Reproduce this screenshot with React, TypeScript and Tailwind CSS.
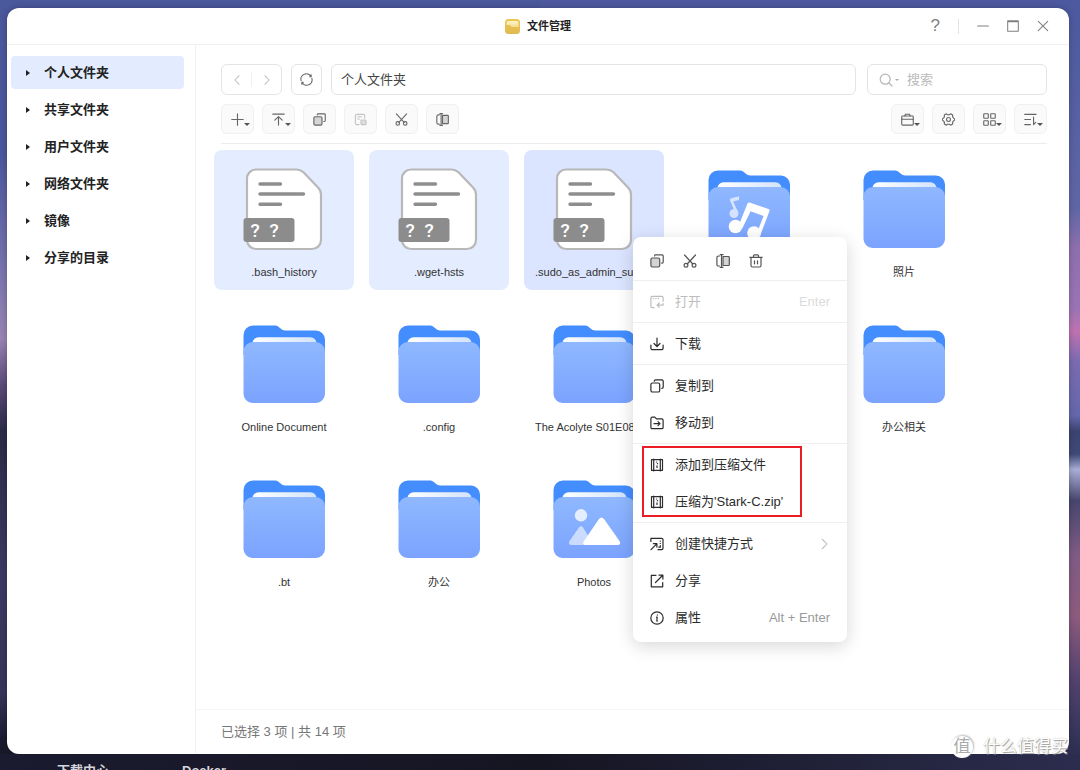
import type { ReactNode } from 'react';

type IconProps = { className?: string; children: ReactNode };

function Icon({ className = 'size-3.5', children }: IconProps) {
  return (
    <svg
      viewBox="0 0 14 14"
      className={`shrink-0 ${className}`}
      fill="none"
      stroke="currentColor"
      strokeWidth="1.2"
      strokeLinecap="round"
      strokeLinejoin="round"
      aria-hidden="true"
    >
      {children}
    </svg>
  );
}

const CopyIcon = () => (
  <Icon>
    <rect x="0.9" y="4" width="8.8" height="9" rx="1.4" fill="#d4d4d4" />
    <path d="M4.6 2V1.8A1 1 0 0 1 5.600.9H12.200a1 1 0 0 1 1 1v6.200a1 1 0 0 1-1 1h-.6" />
  </Icon>
);
const CopyToIcon = () => (
  <Icon>
    <rect x="0.9" y="4" width="8.8" height="9" rx="1.6" />
    <path d="M4.2 2.100a1.400 1.400 0 0 1 1.400-1.200h6.200a1.400 1.400 0 0 1 1.400 1.400v5.600a1.400 1.400 0 0 1-1.400 1.400" />
  </Icon>
);
const PasteIcon = () => (
  <Icon>
    <path d="M5.500 12.500H3a1.500 1.500 0 0 1-1.500-1.500V3A1.500 1.500 0 0 1 3 1.500h7A1.500 1.500 0 0 1 11.500 3v2.500M4 4h4M4 6.500h2" />
    <rect x="7.500" y="7.500" width="5.500" height="5" rx="1" fill="#dedede" />
  </Icon>
);
const CutIcon = () => (
  <Icon>
    <path d="M1.500 1l8.300 9M12.500 1l-8.300 9" />
    <circle cx="3" cy="11.200" r="1.900" />
    <circle cx="11" cy="11.200" r="1.900" />
  </Icon>
);
const RenameIcon = () => (
  <Icon>
    <path d="M7 2.500h5.500a.8.8 0 0 1 .8.8v7.400a.8.8 0 0 1-.8.8H7z" fill="#d4d4d4" />
    <path d="M3.500 2H2.500A1.600 1.600 0 0 0 .900 3.600v6.800A1.600 1.600 0 0 0 2.500 12H3.500M4.200.7H7M5.500.9v12.200M4.200 13.300H7" />
  </Icon>
);
const TrashIcon = () => (
  <Icon>
    <path d="M.8 3.300h12.400M4.500 3V1.800a.9.9 0 0 1 .9-.9h3.200a.9.9 0 0 1 .9.900V3M2 3.500v8a1.500 1.500 0 0 0 1.500 1.500h7a1.500 1.500 0 0 0 1.500-1.500v-8M5.500 6.800v3M8.500 6.800v3" />
  </Icon>
);
const OpenIcon = () => (
  <Icon>
    <path d="M4 12.700H2.300A1.400 1.400 0 0 1 .9 11.300V2.700a1.400 1.400 0 0 1 1.400-1.400h9.400a1.400 1.400 0 0 1 1.400 1.400v3.600M3.200 3.600h.3M5.700 3.600h.3M8.200 3.600h.3M13 8.500v1.700H7.500M9.300 8l-2.200 2.200 2.200 2.200" />
  </Icon>
);
const DownloadIcon = () => (
  <Icon>
    <path d="M7 1.200v8M4 6.500l3 3 3-3M.9 8v3.200a1.500 1.500 0 0 0 1.500 1.500h9.200a1.500 1.500 0 0 0 1.500-1.500V8" />
  </Icon>
);
const MoveIcon = () => (
  <Icon>
    <path d="M.9 3V2.500a1.300 1.300 0 0 1 1.300-1.300h2.600l1.700 1.700h5.300a1.300 1.300 0 0 1 1.300 1.300v7.200a1.300 1.300 0 0 1-1.300 1.300H2.200A1.300 1.300 0 0 1 .9 11.400zM4 7.700h6M8 5.700l2 2-2 2" />
  </Icon>
);
const ZipIcon = () => (
  <Icon>
    <path d="M3.500 1.700H1.500v10.600H3.500M10.500 1.700h2v10.600h-2M3.700 1v12M10.300 1v12M3.700 1.700h6.600M3.700 12.300h6.600M6.400 4h.2M7.400 5.700h.2M7 7.800v1.700" />
  </Icon>
);
const ShortcutIcon = () => (
  <Icon>
    <path d="M.9 4.500V1.300h10.700a1.400 1.400 0 0 1 1.400 1.400v8.600a1.400 1.400 0 0 1-1.400 1.400H8M1 12.700l5.700-5.900M3.400 6.600h3.500v3.500M10.300 4v.2M10.300 6.300v.2M8.800 10.200h1.500V8.600" />
  </Icon>
);
const ShareIcon = () => (
  <Icon>
    <path d="M6 1.300H1.300v11.500h11.400V8.500M5.500 8.500l7-7M9 1.200h3.900v3.900" />
  </Icon>
);
const InfoIcon = () => (
  <Icon>
    <circle cx="7" cy="7" r="6.200" />
    <path d="M7.300 3.900v.2M6.500 6.200h.7L6.800 10h.7" />
  </Icon>
);
const PlusIcon = () => (
  <Icon>
    <path d="M7 .8v12.400M.8 7h12.400" />
  </Icon>
);
const UploadIcon = () => (
  <Icon>
    <path d="M.8 1.200h12.400M7 13V4M3 7.700L7 3.900l4 3.800" />
  </Icon>
);
const CaseIcon = () => (
  <Icon>
    <rect x="0.8" y="3.300" width="12.400" height="9.700" rx="1" />
    <path d="M.8 6.800h12.400M4 3.200l.8-1.900h4.400l.8 1.900" />
  </Icon>
);
const GearIcon = () => (
  <Icon className="size-3.5">
    <path d="M4.700.9L5.900 1.900h2.200l1.200-1 2.200 1.300-.1 1.700 1 1.600 1.200.8v1.400l-1.200.8-1 1.600.1 1.700-2.200 1.300-1.200-1H5.900l-1.200 1-2.200-1.300.1-1.700-1-1.600-1.200-.8V6.300l1.200-.8 1-1.600-.1-1.700z" />
    <circle cx="7" cy="7" r="2.100" />
  </Icon>
);
const GridIcon = () => (
  <Icon>
    <rect x="0.8" y="0.8" width="4.900" height="4.900" rx=".6" />
    <rect x="8.300" y="0.800" width="4.900" height="4.900" rx=".6" />
    <rect x="0.8" y="8.300" width="4.900" height="4.900" rx=".6" />
    <rect x="8.300" y="8.300" width="4.900" height="4.900" rx=".6" />
  </Icon>
);
const SortIcon = () => (
  <Icon>
    <path d="M.8 1.500h12.200M.8 7h6.200M.8 12.500h6.200M10.300 4.500v8l2.300-2.500" />
  </Icon>
);

function ToolButton({
  label,
  menu = false,
  disabled = false,
  children,
}: {
  label: string;
  menu?: boolean;
  disabled?: boolean;
  children: ReactNode;
}) {
  return (
    <button
      type="button"
      aria-label={label}
      disabled={disabled}
      className="relative flex h-[30px] w-[33px] items-center justify-center rounded-md border border-[#f0f0f0] bg-[#fafafa] text-[#666] disabled:text-[#c4c4c4] [&>svg]:size-[13px]"
    >
      {children}
      {menu && (
        <span className="absolute right-[3px] bottom-[7px] border-x-[3px] border-t-[3px] border-x-transparent border-t-[#555]" />
      )}
    </button>
  );
}

function FolderIcon({ art }: { art?: 'music' | 'photo' }) {
  return (
    <svg viewBox="0 0 82 78" className="h-[78px] w-[82px]" aria-hidden="true">
      <defs>
        <linearGradient id="folderFront" x1="0" y1="0" x2="0" y2="1">
          <stop offset="0" stopColor="#8fb8ff" />
          <stop offset="1" stopColor="#7ba3ff" />
        </linearGradient>
        <linearGradient id="folderPaper" x1="0" y1="0" x2="1" y2="0">
          <stop offset="0" stopColor="#ffffff" />
          <stop offset="1" stopColor="#d3e3fb" />
        </linearGradient>
      </defs>
      <path d="M.5 10a9.500 9.500 0 0 1 9.500-9.500h21.500c2 0 3.300.6 4.800 1.900l2 1.700c1.200 1 2 1.400 3.700 1.400h31a9 9 0 0 1 9 9V30H.5z" fill="#438dff" />
      <path d="M9.500 20v-2a6 6 0 0 1 6-5.800h52a6 6 0 0 1 6 5.800v2z" fill="url(#folderPaper)" />
      <path d="M.5 26.500a9.500 9.500 0 0 1 9.500-9.500h62.500a9.500 9.500 0 0 1 9.500 9.500V69a9 9 0 0 1-9 9H9.500a9 9 0 0 1-9-9z" fill="url(#folderFront)" />
      {art === 'music' && (
        <g fill="#fff">
          <g opacity=".65">
            <circle cx="26" cy="43.500" r="4.500" />
            <path d="M22.500 28.500l8.500-2.300v3.700l-5.800 1.700 5.100 10.900-2.500 1.200L21.800 30z" />
          </g>
          <circle cx="27.500" cy="56.500" r="6.800" />
          <circle cx="46" cy="63" r="6.800" />
          <path d="M39.500 33.500q.5-1.500 2-1l19 6.600q1.500.6 1 2L52 66l-3.600-1.800 7.200-18.300-13-4.600L34 59l-4-2z" />
        </g>
      )}
      {art === 'photo' && (
        <g fill="#fff">
          <circle cx="28" cy="35.300" r="6.200" opacity=".78" />
          <path d="M26 47.500q2-2.500 4 0l11 17.500H19q-4.500 0-2.500-4z" opacity=".58" />
          <path d="M46 39q2.500-3 5 0l15.500 22q2 4-2 4H33q-4.500 0-2-4z" />
        </g>
      )}
    </svg>
  );
}

function UnknownFileIcon() {
  return (
    <svg viewBox="0 0 82 84" className="h-[84px] w-[82px]" aria-hidden="true">
      <path
        d="M14 2.500h39.500q4 0 7 2.800L75 20.500q3 3 3 7V73a9 9 0 0 1-9 9H13a9 9 0 0 1-9-9V11.500a9 9 0 0 1 9-9z"
        fill="#fff"
        stroke="#b8b8b8"
        strokeWidth="2.200"
      />
      <path d="M17 17h20.500M17 27h43.500M17 37.200h20.500" stroke="#8e8e8e" strokeWidth="3.400" strokeLinecap="round" />
      <rect x="0.5" y="51" width="51" height="24" rx="3" fill="#8c8c8c" />
      <g fill="#fff" fontSize="19" fontWeight="500" textAnchor="middle" className="font-['Roboto',sans-serif]">
        <text x="12" y="69.500">?</text>
        <text x="31" y="69.500">?</text>
      </g>
    </svg>
  );
}

type Entry = {
  id: string;
  name: string;
  kind: 'file' | 'folder';
  art?: 'music' | 'photo';
  state?: 'selected' | 'focused';
};

const entries: Entry[] = [
  { id: 'history', name: '.bash_history', kind: 'file', state: 'selected' },
  { id: 'hsts', name: '.wget-hsts', kind: 'file', state: 'selected' },
  { id: 'sudo', name: '.sudo_as_admin_successful', kind: 'file', state: 'focused' },
  { id: 'music', name: '', kind: 'folder', art: 'music' },
  { id: 'pictures', name: '照片', kind: 'folder' },
  { id: 'online', name: 'Online Document', kind: 'folder' },
  { id: 'config', name: '.config', kind: 'folder' },
  { id: 'acolyte', name: 'The Acolyte S01E08 1080p', kind: 'folder' },
  { id: 'folder-a', name: '', kind: 'folder' },
  { id: 'office-docs', name: '办公相关', kind: 'folder' },
  { id: 'bt', name: '.bt', kind: 'folder' },
  { id: 'office', name: '办公', kind: 'folder' },
  { id: 'photos', name: 'Photos', kind: 'folder', art: 'photo' },
  { id: 'folder-b', name: '', kind: 'folder' },
];

const tileTone = {
  none: '',
  selected: 'bg-[#e4edff]',
  focused: 'bg-[#dbe5ff]',
};

function Tile({ entry }: { entry: Entry }) {
  return (
    <li className={`flex h-[140px] flex-col items-center rounded-lg ${tileTone[entry.state ?? 'none']}`}>
      <div className="flex h-[101px] items-start">
        {entry.kind === 'file' ? (
          <span className="pt-[17px]"><UnknownFileIcon /></span>
        ) : (
          <span className="pt-5"><FolderIcon art={entry.art} /></span>
        )}
      </div>
      <span className="mt-[13px] w-[118px] truncate text-center text-[11px] leading-4 text-[#333]">{entry.name}</span>
    </li>
  );
}

type MenuEntry = { label: string; icon: ReactNode; hint?: string; disabled?: boolean; submenu?: boolean };

const menuGroups: { id: string; marked?: boolean; items: MenuEntry[] }[] = [
  { id: 'open', items: [{ label: '打开', icon: <OpenIcon />, hint: 'Enter', disabled: true }] },
  { id: 'download', items: [{ label: '下载', icon: <DownloadIcon /> }] },
  {
    id: 'transfer',
    items: [
      { label: '复制到', icon: <CopyToIcon /> },
      { label: '移动到', icon: <MoveIcon /> },
    ],
  },
  {
    id: 'archive',
    marked: true,
    items: [
      { label: '添加到压缩文件', icon: <ZipIcon /> },
      { label: "压缩为'Stark-C.zip'", icon: <ZipIcon /> },
    ],
  },
  {
    id: 'more',
    items: [
      { label: '创建快捷方式', icon: <ShortcutIcon />, submenu: true },
      { label: '分享', icon: <ShareIcon /> },
      { label: '属性', icon: <InfoIcon />, hint: 'Alt + Enter' },
    ],
  },
];

function ContextMenu() {
  return (
    <div
      role="menu"
      className="absolute top-[229px] left-[626px] w-[214px] rounded-lg bg-white pb-1 shadow-[0_4px_18px_rgba(0,0,0,0.16)]"
    >
      <div className="flex h-[43px] items-center gap-[19px] px-[17px] pt-1 text-[#555]">
        <button type="button" aria-label="复制"><CopyIcon /></button>
        <button type="button" aria-label="剪切"><CutIcon /></button>
        <button type="button" aria-label="重命名"><RenameIcon /></button>
        <button type="button" aria-label="删除"><TrashIcon /></button>
      </div>
      {menuGroups.map((group) => (
        <div key={group.id} className="relative border-t border-[#eeeeee] py-[2px]">
          {group.items.map((item) => (
            <button
              key={item.label}
              type="button"
              role="menuitem"
              disabled={item.disabled}
              className="flex h-[37px] w-full items-center gap-[11px] px-[17px] text-left text-[13px] text-[#2b2b2b] disabled:text-[#bdbdbd]"
            >
              {item.icon}
              <span className="flex-1 whitespace-nowrap">{item.label}</span>
              {item.hint && (
                <span className={item.disabled ? 'text-[#dcdcdc]' : 'text-[#9a9a9a]'}>{item.hint}</span>
              )}
              {item.submenu && (
                <span className="text-[#b5b5b5]">
                  <Icon className="size-3">
                    <path d="M5 1.500l5.500 5.500L5 12.500" />
                  </Icon>
                </span>
              )}
            </button>
          ))}
          {group.marked && (
            <span className="pointer-events-none absolute top-[2px] left-[9px] h-[71px] w-40 border-2 border-[#ec1c24]" />
          )}
        </div>
      ))}
    </div>
  );
}

const places = ['个人文件夹', '共享文件夹', '用户文件夹', '网络文件夹', '镜像', '分享的目录'];

function Sidebar() {
  return (
    <nav className="w-[189px] shrink-0 border-r border-[#f0f0f0] pt-[11px] pr-[11px] pl-1">
      <ul className="flex flex-col gap-1">
        {places.map((place, index) => (
          <li key={place}>
            <a
              href="#"
              className={`flex h-[33px] items-center gap-3.5 rounded pl-[15px] text-[13px] font-bold text-[#222] ${index === 0 ? 'bg-[#e3ecff]' : ''}`}
            >
              <span className="border-y-[3px] border-l-4 border-y-transparent border-l-[#222]" />
              {place}
            </a>
          </li>
        ))}
      </ul>
    </nav>
  );
}

function TitleBar() {
  return (
    <header className="grid h-[37px] shrink-0 grid-cols-[1fr_auto_1fr] items-center border-b border-[#f0f0f0]">
      <h1 className="col-start-2 flex items-center gap-[7px] text-[11px] font-bold text-[#222]">
        <svg viewBox="0 0 15 15" className="size-[15px]" aria-hidden="true">
          <defs>
            <linearGradient id="appGold" x1="0" y1="0" x2="0" y2="1">
              <stop offset="0" stopColor="#efc64f" />
              <stop offset="1" stopColor="#dfba52" />
            </linearGradient>
            <linearGradient id="appFlap" x1="0" y1="0" x2="0" y2="1">
              <stop offset="0" stopColor="#fff6cf" />
              <stop offset="1" stopColor="#f5dc8c" />
            </linearGradient>
          </defs>
          <rect width="15" height="15" rx="3.500" fill="url(#appGold)" />
          <path d="M1.500 6V4.200Q1.500 2 3.700 2h7.600q2.200 0 2.200 2.200V8H7.500q-1.300 0-1.800-1T4.200 6z" fill="url(#appFlap)" />
        </svg>
        文件管理
      </h1>
      <div className="flex items-center justify-end gap-[18px] pr-5 text-[#808080]">
        <button type="button" aria-label="帮助" className="text-[17px] leading-5">?</button>
        <span className="h-[15px] w-px bg-[#e3e3e3]" />
        <button type="button" aria-label="最小化"><Icon className="size-3"><path d="M.7 7h12.600" /></Icon></button>
        <button type="button" aria-label="最大化">
          <Icon className="size-3"><path d="M.8.8h12.400v12.400H.8zM.8 2h12.400" /></Icon>
        </button>
        <button type="button" aria-label="关闭">
          <Icon className="size-3"><path d="M1.500 1.500l11 11M12.500 1.500l-11 11" /></Icon>
        </button>
      </div>
    </header>
  );
}

function Toolbar() {
  return (
    <div className="mr-[22px] ml-[25px] border-b border-[#ececec] pt-[19px] pb-[9px]">
      <div className="flex h-[31px] gap-[9px]">
        <div className="flex w-[61px] items-center rounded-md border border-[#e4e4e4] text-[#bdbdbd]">
          <button type="button" aria-label="后退" className="flex flex-1 justify-center">
            <Icon className="size-3"><path d="M9.500 2L4.500 7l5 5" /></Icon>
          </button>
          <span className="h-[15px] w-px bg-[#f0f0f0]" />
          <button type="button" aria-label="前进" className="flex flex-1 justify-center">
            <Icon className="size-3"><path d="M4.500 2l5 5-5 5" /></Icon>
          </button>
        </div>
        <button
          type="button"
          aria-label="刷新"
          className="flex w-[31px] items-center justify-center rounded-md border border-[#e4e4e4] text-[#666]"
        >
          <Icon className="size-[13px]">
            <path d="M1.200 8.200A5.800 5.800 0 0 1 11.800 3.700M12.800 5.800A5.800 5.800 0 0 1 2.200 10.300M12 2v2h-1.500M2 12v-2h1.500" />
          </Icon>
        </button>
        <input
          aria-label="路径"
          defaultValue="个人文件夹"
          className="min-w-0 flex-1 rounded-md border border-[#e4e4e4] px-[9px] text-[13px] text-[#444] outline-none"
        />
        <label className="ml-0.5 flex w-[180px] items-center rounded-md border border-[#e4e4e4] pl-[11px] text-[#b5b5b5]">
          <Icon>
            <circle cx="6.200" cy="6.200" r="5" />
            <path d="M10 10l3 3" />
          </Icon>
          <span className="ml-[2px] border-x-2 border-t-2 border-x-transparent border-t-[#aaa]" />
          <input
            aria-label="搜索"
            placeholder="搜索"
            className="ml-2 w-full min-w-0 text-[13px] outline-none placeholder:text-[#bbb]"
          />
        </label>
      </div>
      <div className="mt-[9px] flex gap-2">
        <ToolButton label="新建" menu><PlusIcon /></ToolButton>
        <ToolButton label="上传" menu><UploadIcon /></ToolButton>
        <ToolButton label="复制"><CopyIcon /></ToolButton>
        <ToolButton label="粘贴" disabled><PasteIcon /></ToolButton>
        <ToolButton label="剪切"><CutIcon /></ToolButton>
        <ToolButton label="重命名"><RenameIcon /></ToolButton>
        <div className="ml-auto flex gap-2">
          <ToolButton label="工具" menu><CaseIcon /></ToolButton>
          <ToolButton label="设置"><GearIcon /></ToolButton>
          <ToolButton label="视图" menu><GridIcon /></ToolButton>
          <ToolButton label="排序" menu><SortIcon /></ToolButton>
        </div>
      </div>
    </div>
  );
}

function Wallpaper() {
  return (
    <div className="absolute inset-0 flex">
      <div className="flex-1 bg-[linear-gradient(to_bottom,#4a589c_0%,#4b579d_20%,#7472ad_34%,#9a84b4_44%,#5b4a78_50%,#2b2b48_56%,#3b3a63_75%,#35355a_90%,#1b1b30_96%,#14141f_100%)]" />
      <div className="flex-1 bg-[linear-gradient(to_bottom,#4c599f_0%,#5f66a5_27%,#8d6fae_32%,#9a74b5_40%,#c072b0_43%,#7a6bb0_47%,#6467ab_54%,#3c4370_56%,#3f4a78_59%,#a9aed6_61%,#47466e_65%,#7f5b84_72%,#8d5b7e_80%,#54436f_88%,#37365c_95%,#26284a_100%)]" />
    </div>
  );
}

export default function App() {
  return (
    <div className="relative flex h-screen flex-col overflow-hidden bg-[#4a589c] pt-2 font-['Liberation_Sans','Noto_Sans_CJK_SC',sans-serif]">
      <Wallpaper />
      <main className="relative mr-[11px] ml-[7px] flex min-h-0 flex-1 flex-col rounded-xl bg-white shadow-[0_0_6px_rgba(0,0,0,0.25)]">
        <TitleBar />
        <div className="flex min-h-0 flex-1">
          <Sidebar />
          <section className="flex min-w-0 flex-1 flex-col">
            <Toolbar />
            <ul className="grid min-h-0 flex-1 grid-cols-[repeat(auto-fill,140px)] content-start gap-[15px] overflow-hidden pt-1.5 pl-[18px]">
              {entries.map((entry) => (
                <Tile key={entry.id} entry={entry} />
              ))}
            </ul>
            <footer className="flex h-[45px] shrink-0 items-center border-t border-[#f5f5f5] pl-[25px] text-[13px] text-[#777]">
              已选择 3 项 | 共 14 项
            </footer>
          </section>
        </div>
        <ContextMenu />
      </main>
      <div className="relative flex h-4 shrink-0 gap-[73px] overflow-hidden bg-linear-to-r from-[#1b1b30] via-[#151522] to-[#2c2d4e] pt-[7px] pl-[57px] text-[13px] leading-5 font-bold text-[#d5d5dc]">
        <span>下载中心</span>
        <span>Docker</span>
      </div>
      <div className="absolute right-3 bottom-[11px] flex items-center gap-2.5 text-[17px] leading-6 text-white [text-shadow:1px_1px_1px_#999,0_0_1px_#bbb]">
        <span className="flex size-[22px] items-center justify-center rounded-full bg-white text-[#aaa] shadow-[1px_-1px_2px_#bbb] [text-shadow:none]">
          值
        </span>
        <span>什么值得买</span>
      </div>
    </div>
  );
}
